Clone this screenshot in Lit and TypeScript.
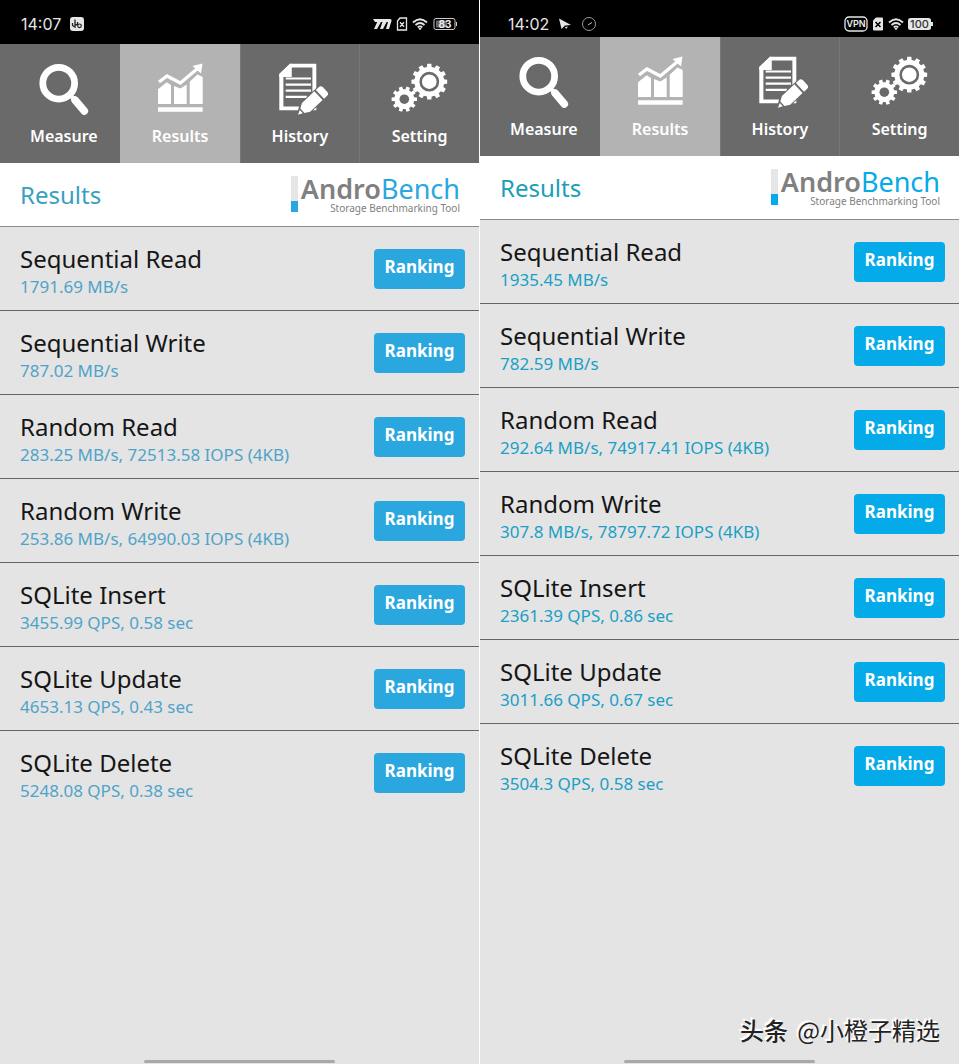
import { LitElement, html, svg, css } from "lit";
import { customElement, property } from "lit/decorators.js";

type Result = { name: string; value: string };

const gear = (cx: number, cy: number, outer: number, root: number, teeth: number) => {
  const pts: string[] = [];
  const step = (Math.PI * 2) / teeth;
  for (let i = 0; i < teeth; i++) {
    const a = i * step;
    for (const [r, d] of [[root, -0.3], [outer, -0.22], [outer, 0.22], [root, 0.3]]) {
      pts.push(`${(cx + r * Math.cos(a + d * step)).toFixed(2)} ${(cy + r * Math.sin(a + d * step)).toFixed(2)}`);
    }
  }
  return `M${pts.join("L")}Z`;
};

const tabIcons: Record<string, unknown> = {
  Measure: svg`<circle cx="24.7" cy="21.2" r="15.9" fill="none" stroke="#fff" stroke-width="6.8"/>
    <path d="M35 32L40 37" stroke="#fff" stroke-width="4"/>
    <path d="M41 38L50.3 49" stroke="#fff" stroke-width="7.6" stroke-linecap="round"/>`,
  Results: svg`<path fill="#fff" d="M8 27.3L16.7 20.3L21 23V42H8ZM24 24L30.3 26.5L36.7 22.5V42H24ZM39.7 19.7L47.5 12.5L52.7 15V42H39.7ZM8 45.3H52.7V49.7H8Z"/>
    <path d="M9 20L17 14L30.3 21L47 7" fill="none" stroke="#fff" stroke-width="3.2"/>
    <path fill="#fff" d="M52.5 1.5L42.5 4L51 11.5Z"/>`,
  History: svg`<path fill="#fff" fill-rule="evenodd" d="M20 1.7H46.3V48.3H9.3V12ZM21.5 5.6V15H13.4V44.4H42.4V5.6Z"/>
    <path fill="#fff" d="M20 1.7L9.3 12V15H21.5V1.7Z"/>
    <path d="M15.7 16.5H41M15.7 22.6H41M15.7 28.7H41M15.7 34.8H37" stroke="#fff" stroke-width="2.2"/>
    <g transform="translate(28 52.8) rotate(-43)">
      <path fill="#6a6a6a" d="M-2 0L9 -7H39V7H9Z"/>
      <path fill="#fff" d="M0 0L4.5 -2.2V2.2ZM6 -3L11 -6H28V6H11L6 3ZM30 -6H34Q37 -6 37 -3V3Q37 6 34 6H30Z"/>
    </g>`,
  Setting: svg`<path fill="#fff" d="${gear(39.3, 19.7, 18, 15, 12)}"/>
    <circle cx="39.3" cy="19.7" r="8.6" fill="none" stroke="#6a6a6a" stroke-width="2.6"/>
    <path fill="#fff" d="${gear(14.3, 37.2, 12.8, 10, 10)}"/>
    <circle cx="14.3" cy="37.2" r="4.8" fill="#6a6a6a"/>`,
};

@customElement("bench-screen")
class BenchScreen extends LitElement {
  @property() time = "";
  @property() device = "a";
  @property({ attribute: false }) results: Result[] = [];

  static styles = css`
    :host {
      display: flex;
      flex-direction: column;
      min-width: 0;
      background: #e4e4e4;
      border-right: 1px solid #fff;
      --accent: #29a7de;
      --value: #4fa3c9;
      --heading: #3a9fc0;
    }
    :host([device="b"]) {
      --accent: #05aae8;
      --value: #1a9fc6;
      --heading: #1a9fba;
    }
    .status {
      display: flex;
      align-items: center;
      height: 44px;
      padding: 3px 21px 0;
      box-sizing: border-box;
      background: #000;
      color: #e6e6e6;
      font: 16px/20px Inter, sans-serif;
    }
    :host([device="b"]) .status {
      height: 37px;
      padding: 10px 26px 0 28px;
    }
    .left, .right {
      display: flex;
      align-items: center;
      gap: 9px;
    }
    .right {
      margin-left: auto;
      gap: 4px;
    }
    .tabs {
      display: grid;
      grid-template-columns: repeat(4, 1fr);
    }
    .tab {
      display: flex;
      flex-direction: column;
      align-items: center;
      height: 119px;
      padding: 18px 0 0;
      border: 0;
      background: #6a6a6a;
      color: #fff;
      font: 600 16px/36px "Noto Sans", sans-serif;
    }
    .tab:first-child {
      padding-left: 8px;
    }
    .tab + .tab {
      border-left: 1px solid #777;
    }
    .tab.on {
      background: #b3b3b3;
      border-color: #b3b3b3;
    }
    .tab svg {
      display: block;
    }
    .head {
      display: flex;
      align-items: center;
      justify-content: space-between;
      height: 63px;
      padding: 0 19px 0 20px;
      border-bottom: 1px solid #8c8c8c;
      background: #fff;
    }
    h1 {
      margin: 0;
      color: var(--heading);
      font: 24px/32px "Noto Sans", sans-serif;
    }
    .brand {
      display: flex;
      gap: 3px;
    }
    .gauge {
      width: 7px;
      height: 36px;
      background: linear-gradient(#e6e6e6 70%, var(--accent) 70%);
    }
    .logo {
      text-align: right;
      color: #808080;
      font: 10px/12px "Noto Sans", sans-serif;
    }
    .name {
      font-size: 27px;
      line-height: 26px;
    }
    .name b {
      font-weight: 600;
    }
    .name span {
      color: var(--accent);
    }
    ul {
      margin: 0;
      padding: 0;
      list-style: none;
    }
    li {
      display: flex;
      align-items: center;
      justify-content: space-between;
      padding: 14px 14px 13px 20px;
      border-bottom: 1px solid #666;
    }
    li:last-child {
      border-bottom: 0;
    }
    .text {
      padding-top: 2px;
      margin-bottom: -2px;
    }
    h2 {
      margin: 0;
      color: #161616;
      font: 24px/32px "Noto Sans", sans-serif;
    }
    p {
      margin: 0;
      color: var(--value);
      font: 17px/24px "Noto Sans", sans-serif;
    }
    .rank {
      width: 91px;
      height: 40px;
      padding: 0 0 4px;
      border: 0;
      border-radius: 4px;
      background: var(--accent);
      color: #fff;
      font: bold 17px/24px "Noto Sans", sans-serif;
    }
    .home {
      width: 40%;
      height: 3px;
      margin: auto auto 1px;
      border-radius: 2px;
      background: #a9a9a9;
    }
  `;

  private statusIcons() {
    const wifi = svg`<path fill="none" stroke="#e6e6e6" stroke-width="1.8" d="M1 5.5Q8 -1 15 5.5M3.5 8Q8 4 12.5 8M5.7 10.4Q8 8.4 10.3 10.4"/><path fill="#e6e6e6" d="M6.4 11.4Q8 10 9.6 11.4L8 13.2Z"/>`;
    if (this.device === "a") {
      return html`
        <svg width="20" height="12" viewBox="0 0 20 12"><path fill="#e6e6e6" d="M1 1H18Q20 1 19.5 3L17 11H14L16 4H14.6L11 11H8L10.5 4H9L5 11H2L5.2 4H3Z"/></svg>
        <svg width="12" height="14" viewBox="0 0 12 14"><path fill="none" stroke="#e6e6e6" stroke-width="1.3" d="M4 1H10.5V13H1.5V4ZM4 5.3L8 9.7M8 5.3L4 9.7"/></svg>
        <svg width="16" height="14" viewBox="0 0 16 14">${wifi}</svg>
        <svg width="26" height="14" viewBox="0 0 26 14"><rect x="2" y="1.5" width="21" height="11" rx="2" fill="none" stroke="#ccc"/><rect x="4" y="3.5" width="11" height="7" fill="#666"/><path d="M24.5 5V9" stroke="#ccc"/><text x="13" y="11" text-anchor="middle" font-family="Inter" font-weight="700" font-size="10" fill="#eee">83</text></svg>`;
    }
    return html`
      <svg width="24" height="16" viewBox="0 0 24 16"><rect x="1" y="1" width="22" height="14" rx="4" fill="none" stroke="#e6e6e6" stroke-width="1.3"/><text x="12" y="11" text-anchor="middle" font-family="Inter" font-weight="600" font-size="9" fill="#eee">VPN</text></svg>
      <svg width="12" height="14" viewBox="0 0 12 14"><path fill="#e6e6e6" d="M4 .5H10Q11 .5 11 1.5V12.5Q11 13.5 10 13.5H2Q1 13.5 1 12.5V3.5Z"/><path stroke="#000" stroke-width="1.6" d="M3.5 5L8.5 10M8.5 5L3.5 10"/></svg>
      <svg width="16" height="14" viewBox="0 0 16 14">${wifi}</svg>
      <svg width="25" height="14" viewBox="0 0 25 14"><rect x="0" y="1" width="23" height="12" rx="2.5" fill="#e6e6e6"/><path d="M24 5V9" stroke="#e6e6e6" stroke-width="2"/><text x="11.5" y="11" text-anchor="middle" font-family="Inter" font-weight="500" font-size="11" fill="#333">100</text></svg>`;
  }

  private noticeIcons() {
    return this.device === "a"
      ? html`<svg width="14" height="14" viewBox="0 0 14 14"><rect width="14" height="14" rx="3" fill="#e6e6e6"/><path d="M2.5 6V8.5L5 10V2.5M5 8L7.5 7.5V5" fill="none" stroke="#222" stroke-width="1.3"/><circle cx="9.5" cy="8.8" r="1.8" fill="none" stroke="#222" stroke-width="1.2"/></svg>`
      : html`<svg width="14" height="14" viewBox="0 0 14 14"><path fill="#e6e6e6" d="M1 1.5L13 8L7 8.5L3.5 12Z"/><path fill="#e6e6e6" d="M7 10L10 9.5L8 12Z"/></svg>
          <svg width="16" height="16" viewBox="0 0 16 16"><circle cx="8" cy="8" r="6.5" fill="none" stroke="#999"/><path d="M7 9L11 6.5" stroke="#bbb"/></svg>`;
  }

  render() {
    return html`
      <div class="status">
        <div class="left"><span>${this.time}</span>${this.noticeIcons()}</div>
        <div class="right">${this.statusIcons()}</div>
      </div>
      <nav class="tabs">
        ${Object.keys(tabIcons).map(
          (name) => html`<button class="tab ${name === "Results" ? "on" : ""}">
            <svg width="60" height="56" viewBox="0 0 60 56">${tabIcons[name]}</svg>${name}
          </button>`
        )}
      </nav>
      <header class="head">
        <h1>Results</h1>
        <div class="brand">
          <div class="gauge"></div>
          <div class="logo">
            <div class="name"><b>Andro</b><span>Bench</span></div>
            Storage Benchmarking Tool
          </div>
        </div>
      </header>
      <ul>
        ${this.results.map(
          (r) => html`<li>
            <div class="text"><h2>${r.name}</h2><p>${r.value}</p></div>
            <button class="rank">Ranking</button>
          </li>`
        )}
      </ul>
      <div class="home"></div>
    `;
  }
}

const names = ["Sequential Read", "Sequential Write", "Random Read", "Random Write", "SQLite Insert", "SQLite Update", "SQLite Delete"];
const toResults = (values: string[]): Result[] => names.map((name, i) => ({ name, value: values[i] }));

const first = toResults([
  "1791.69 MB/s",
  "787.02 MB/s",
  "283.25 MB/s, 72513.58 IOPS (4KB)",
  "253.86 MB/s, 64990.03 IOPS (4KB)",
  "3455.99 QPS, 0.58 sec",
  "4653.13 QPS, 0.43 sec",
  "5248.08 QPS, 0.38 sec",
]);
const second = toResults([
  "1935.45 MB/s",
  "782.59 MB/s",
  "292.64 MB/s, 74917.41 IOPS (4KB)",
  "307.8 MB/s, 78797.72 IOPS (4KB)",
  "2361.39 QPS, 0.86 sec",
  "3011.66 QPS, 0.67 sec",
  "3504.3 QPS, 0.58 sec",
]);

@customElement("app-root")
class AppRoot extends LitElement {
  static styles = css`
    :host {
      position: relative;
      display: grid;
      grid-template-columns: 1fr 1fr;
      min-height: 100vh;
    }
    .mark {
      position: absolute;
      right: 20px;
      bottom: 16px;
      color: #222;
      font: 24px/36px "Noto Sans CJK SC", sans-serif;
      text-shadow: -1px -1px 0 #fff, -2px -2px 1px #fff;
    }
    .mark b {
      margin-right: 4px;
      font-weight: 500;
    }
  `;

  render() {
    return html`
      <bench-screen device="a" time="14:07" .results=${first}></bench-screen>
      <bench-screen device="b" time="14:02" .results=${second}></bench-screen>
      <div class="mark"><b>头条</b> @小橙子精选</div>
    `;
  }
}
